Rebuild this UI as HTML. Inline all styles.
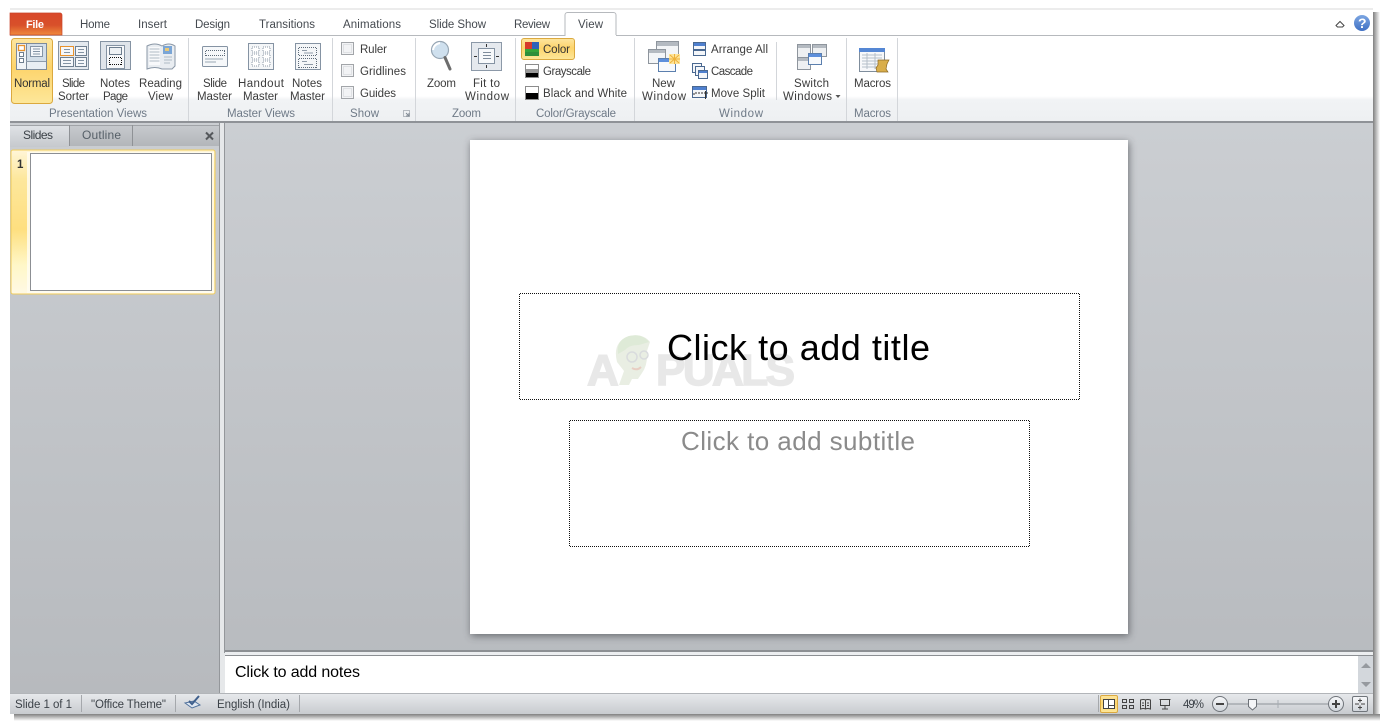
<!DOCTYPE html>
<html><head><meta charset="utf-8"><title>PowerPoint</title>
<style>
html,body{margin:0;padding:0;background:#fff;width:1384px;height:724px;overflow:hidden}
svg{display:block}
text{font-family:"Liberation Sans",sans-serif;font-size:11.5px;fill:#3c3c3c}
.g{fill:#6f7a87}
.d{fill:#454a50}
.s{fill:#3c4248}
.dot{fill:none;stroke:#111;stroke-dasharray:1 1}
</style></head><body>
<svg width="1384" height="724" viewBox="0 0 1384 724" xmlns="http://www.w3.org/2000/svg">
<defs>
<linearGradient id="main" x1="0" y1="0" x2="0" y2="1"><stop offset="0" stop-color="#cbced2"/><stop offset="1" stop-color="#b7babe"/></linearGradient>
<linearGradient id="file" x1="0" y1="0" x2="0" y2="1"><stop offset="0" stop-color="#d9482a"/><stop offset=".55" stop-color="#d8502a"/><stop offset="1" stop-color="#f08a3c"/></linearGradient>
<linearGradient id="sel" x1="0" y1="0" x2="0" y2="1"><stop offset="0" stop-color="#fde6a0"/><stop offset=".45" stop-color="#fdd46c"/><stop offset="1" stop-color="#fde79a"/></linearGradient>
<linearGradient id="thumb" x1="0" y1="0" x2="0" y2="1"><stop offset="0" stop-color="#fff6d8"/><stop offset=".2" stop-color="#fde79c"/><stop offset=".55" stop-color="#fedf80"/><stop offset=".8" stop-color="#fff7c8"/><stop offset="1" stop-color="#fff9e4"/></linearGradient>
<linearGradient id="tab" x1="0" y1="0" x2="0" y2="1"><stop offset="0" stop-color="#dfe2e6"/><stop offset="1" stop-color="#c6c9cd"/></linearGradient>
<linearGradient id="tab2" x1="0" y1="0" x2="0" y2="1"><stop offset="0" stop-color="#c6c9cd"/><stop offset="1" stop-color="#b3b6ba"/></linearGradient>
<linearGradient id="stat" x1="0" y1="0" x2="0" y2="1"><stop offset="0" stop-color="#e8eaed"/><stop offset="1" stop-color="#c8cbcf"/></linearGradient>
<linearGradient id="btn" x1="0" y1="0" x2="0" y2="1"><stop offset="0" stop-color="#f8f9fb"/><stop offset="1" stop-color="#cfd4da"/></linearGradient>
<linearGradient id="shr" x1="0" y1="0" x2="1" y2="0"><stop offset="0" stop-color="#808080"/><stop offset="1" stop-color="#fff"/></linearGradient>
<linearGradient id="shb" x1="0" y1="0" x2="0" y2="1"><stop offset="0" stop-color="#808080"/><stop offset="1" stop-color="#fff"/></linearGradient>
<linearGradient id="help" x1="0" y1="0" x2="0" y2="1"><stop offset="0" stop-color="#7da6e2"/><stop offset="1" stop-color="#3f70c4"/></linearGradient>
<linearGradient id="band" x1="0" y1="0" x2="0" y2="1"><stop offset="0" stop-color="#fff"/><stop offset=".15" stop-color="#f1f3f5"/><stop offset="1" stop-color="#eef0f2"/></linearGradient>
<filter id="blur" x="-10%" y="-10%" width="120%" height="120%"><feGaussianBlur stdDeviation="4"/></filter>
</defs>

<!-- window shadow -->
<rect x="1373" y="12" width="7" height="702" fill="url(#shr)"/>
<rect x="14" y="714" width="1366" height="7" fill="url(#shb)"/>
<rect x="10" y="8" width="1363" height="2" fill="#ececec"/>

<!-- tab row -->
<rect x="10" y="10" width="1363" height="26" fill="#fff"/>
<rect x="10" y="35" width="1363" height="1" fill="#b6b9bd"/>
<path d="M10 35V13h50a2 2 0 0 1 2 2v20z" fill="url(#file)" stroke="#c9452a" stroke-width=".7"/>
<text x="26" y="28" textLength="18" style="fill:#fff;font-weight:bold;font-size:11px">File</text>
<text x="80" y="28" textLength="30" class="d">Home</text>
<text x="138" y="28" textLength="29" class="d">Insert</text>
<text x="195" y="28" textLength="35" class="d">Design</text>
<text x="259" y="28" textLength="56" class="d">Transitions</text>
<text x="343" y="28" textLength="58" class="d">Animations</text>
<text x="429" y="28" textLength="57" class="d">Slide Show</text>
<text x="514" y="28" textLength="36" class="d">Review</text>
<path d="M565 36V15a2.500 2.500 0 0 1 2.500-2.500h46a2.500 2.500 0 0 1 2.500 2.500v21" fill="#fff" stroke="#b6b9bd"/>
<rect x="566" y="35" width="50" height="2" fill="#fff"/>
<text x="578" y="28" textLength="25" class="d">View</text>
<path d="M1336 25.500l4-4 4 4-1.500 1.500h-5z" fill="#fff" stroke="#444" stroke-width="1"/>
<circle cx="1362" cy="23" r="8" fill="url(#help)"/>
<text x="1358" y="28" textLength="8" style="fill:#fff;font-weight:bold;font-size:14px">?</text>

<!-- ribbon -->
<rect x="10" y="36" width="1363" height="60" fill="#fff"/>
<rect x="10" y="96" width="1363" height="25" fill="url(#band)"/>
<rect x="10" y="121" width="1363" height="2" fill="#8f9297"/>
<g fill="#d3d6da">
<rect x="188" y="38" width="1" height="83"/><rect x="332" y="38" width="1" height="83"/><rect x="415" y="38" width="1" height="83"/><rect x="515" y="38" width="1" height="83"/><rect x="634" y="38" width="1" height="83"/><rect x="846" y="38" width="1" height="83"/><rect x="897" y="38" width="1" height="83"/><rect x="776" y="42" width="1" height="58"/>
</g>

<!-- Normal button -->
<rect x="11.500" y="38.500" width="41" height="65" rx="3" fill="url(#sel)" stroke="#dba93f"/>
<rect x="16.500" y="43.500" width="30" height="26" fill="#e9eef3" stroke="#7d8b9b"/>
<rect x="26" y="44" width="20" height="17" fill="#d3dee8"/>
<rect x="17" y="44" width="9" height="25" fill="#f1f4f7"/>
<rect x="26" y="44" width="1" height="25" fill="#7d8b9b"/>
<rect x="26" y="61" width="20" height="1" fill="#8e9cab"/>
<rect x="18.500" y="45.500" width="6" height="5" fill="#fff" stroke="#e8922d" stroke-width="1.300"/>
<rect x="19.500" y="52.500" width="4" height="4" fill="#fff" stroke="#6f7f90"/>
<rect x="19.500" y="58.500" width="4" height="4" fill="#fff" stroke="#6f7f90"/>
<rect x="30.500" y="46.500" width="12" height="10" fill="#f5f7fa" stroke="#8494a5"/>
<path d="M33 49h7M33 51.500h7M33 54h7" stroke="#8494a5"/>
<text x="14" y="87" textLength="36" style="fill:#333">Normal</text>

<!-- Slide Sorter -->
<rect x="58.500" y="41.500" width="30" height="28" fill="#e4e9ef" stroke="#8593a3"/>
<rect x="60.500" y="46.500" width="13" height="9" fill="#f5f7fa" stroke="#e8922d"/>
<rect x="75.500" y="46.500" width="11" height="9" fill="#f5f7fa" stroke="#6f7f90"/>
<rect x="60.500" y="57.500" width="13" height="9" fill="#f5f7fa" stroke="#6f7f90"/>
<rect x="75.500" y="57.500" width="11" height="9" fill="#f5f7fa" stroke="#6f7f90"/>
<path d="M64 49.500h6M64 52.500h6M78 49.500h6M78 52.500h6M63 60.500h8M63 63.500h8M78 60.500h6M78 63.500h6" stroke="#8494a5"/>
<text x="62" y="87" textLength="23">Slide</text><text x="58" y="100" textLength="31">Sorter</text>

<!-- Notes Page -->
<rect x="100.500" y="41.500" width="30" height="28" fill="#dfe4ea" stroke="#8593a3"/>
<rect x="106.500" y="45.500" width="18" height="23" fill="#f7f8fa" stroke="#8593a3"/>
<rect x="109.500" y="47.500" width="12" height="7" fill="#eef1f4" stroke="#6f7f90"/>
<path class="dot" d="M110 57.500h12M110 64.500h12M109.500 58v7M121.500 58v7"/>
<text x="100" y="87" textLength="30">Notes</text><text x="103" y="100" textLength="25">Page</text>

<!-- Reading View -->
<path d="M147 46q8-4 15 0q7-4 13 0v20l-3 3h-10q-7-3-15 0z" fill="#e9edf1" stroke="#8a97a6"/>
<rect x="149" y="47" width="11" height="18" fill="#f8f9fb"/>
<path d="M149.500 49h10M149.500 52h10M149.500 55h10M149.500 58h10M149.500 61h10" stroke="#b0bac5"/>
<rect x="163" y="46" width="9" height="8" fill="#7ba6d6"/>
<rect x="165" y="48" width="4" height="3" fill="#e8c878"/>
<path d="M164 57h8M164 60h8M164 63h6" stroke="#b0bac5"/>
<text x="139" y="87" textLength="43">Reading</text><text x="148" y="100" textLength="25">View</text>
<text x="49" y="117" textLength="98" class="g">Presentation Views</text>

<!-- Slide Master -->
<rect x="202.500" y="46.500" width="25" height="20" rx="1" fill="#f6f8fa" stroke="#8593a3"/>
<path class="dot" style="stroke:#5d6a78" d="M206 50.500h19M206 55.500h19M205.500 51v5M224.500 51v5"/>
<path d="M205 59h18M205 62h11" stroke="#9aa7b4"/>
<text x="203" y="87" textLength="24">Slide</text><text x="197" y="100" textLength="35">Master</text>

<!-- Handout Master -->
<rect x="248.500" y="43.500" width="25" height="26" fill="#f4f6f8" stroke="#8593a3"/>
<path d="M252 47h7v5h-7zM263 47h7v5h-7zM252 54h7v5h-7zM263 54h7v5h-7zM252 61h7v5h-7zM263 61h7v5h-7z" fill="#fff" stroke="#8e9aa7" stroke-dasharray="1 1"/>
<text x="238" y="87" textLength="46">Handout</text><text x="243" y="100" textLength="35">Master</text>

<!-- Notes Master -->
<rect x="295.500" y="43.500" width="25" height="26" fill="#f4f6f8" stroke="#8593a3"/>
<path class="dot" style="stroke:#5d6a78" d="M299 47.500h18M299 55.500h18M298.500 48v8M316.500 48v8M299 58.500h18M299 67.500h18M298.500 59v9M316.500 59v9"/>
<path d="M302 50.500h5M304 53h9M302 61.500h5M304 64.500h9" stroke="#8e9aa7"/>
<text x="292" y="87" textLength="30">Notes</text><text x="290" y="100" textLength="35">Master</text>
<text x="227" y="117" textLength="68" class="g">Master Views</text>

<!-- Show -->
<g fill="#f2f3f5" stroke="#a2a5a9"><rect x="341.500" y="42.500" width="12" height="12"/><rect x="341.500" y="64.500" width="12" height="12"/><rect x="341.500" y="86.500" width="12" height="12"/></g>
<g fill="none" stroke="#dfe1e4"><rect x="343.500" y="44.500" width="8" height="8"/><rect x="343.500" y="66.500" width="8" height="8"/><rect x="343.500" y="88.500" width="8" height="8"/></g>
<text x="360" y="53" textLength="27">Ruler</text>
<text x="360" y="75" textLength="46">Gridlines</text>
<text x="360" y="97" textLength="36">Guides</text>
<text x="350" y="117" textLength="29" class="g">Show</text>
<path d="M403.500 110.500h6v6h-6z" fill="none" stroke="#b5bac0"/><path d="M406 113l3 3m-3 0h3v-3" fill="none" stroke="#7f8892"/>

<!-- Zoom -->
<circle cx="440" cy="50" r="8.500" fill="#cfe0ee" stroke="#97a6b4" stroke-width="1.200"/>
<path d="M433 50q1-6 7-7" fill="none" stroke="#fff" stroke-width="2"/>
<path d="M445 57.500l5 11.500" stroke="#6d6d6d" stroke-width="3" stroke-linecap="round"/>
<text x="427" y="87" textLength="29">Zoom</text>
<rect x="471.500" y="42.500" width="30" height="28" fill="#e5e9ee" stroke="#8c99a8"/>
<rect x="478.500" y="48.500" width="16" height="15" fill="#f7f9fb" stroke="#8593a3"/>
<path d="M483 52.500h8M483 55.500h8M483 58.500h8" stroke="#7e8c9b"/>
<path d="M486.500 44v3M486.500 65v3M474 56.500h3M496 56.500h3" stroke="#333"/>
<text x="473" y="87" textLength="27">Fit to</text><text x="465" y="100" textLength="44">Window</text>
<text x="452" y="117" textLength="29" class="g">Zoom</text>

<!-- Color -->
<rect x="521.500" y="38.500" width="53" height="21" rx="2.500" fill="url(#sel)" stroke="#dba93f"/>
<rect x="525" y="42" width="14" height="14" fill="#2f8f3a"/>
<rect x="525" y="42" width="7" height="7" fill="#d63a2a"/>
<rect x="532" y="42" width="7" height="7" fill="#2e62b8"/>
<rect x="525" y="49" width="14" height="3" fill="#35a43a"/>
<text x="543" y="53" textLength="27" style="fill:#333">Color</text>
<rect x="525.500" y="64.500" width="13" height="13" fill="#fff" stroke="#8c8c8c"/><rect x="526" y="69" width="12" height="4" fill="#9a9a9a"/><rect x="526" y="73" width="12" height="4" fill="#000"/>
<text x="543" y="75" textLength="48">Grayscale</text>
<rect x="525.500" y="86.500" width="13" height="13" fill="#fff" stroke="#8c8c8c"/><rect x="526" y="93" width="12" height="6" fill="#000"/>
<text x="543" y="97" textLength="84">Black and White</text>
<text x="536" y="117" textLength="80" class="g">Color/Grayscale</text>

<!-- New Window -->
<rect x="656.500" y="41.500" width="22" height="18" fill="#f3f5f7" stroke="#8e959d"/><rect x="657" y="42" width="21" height="4" fill="#b4bac1"/>
<rect x="648.500" y="49.500" width="17" height="14" fill="#f3f5f7" stroke="#8e959d"/><rect x="649" y="50" width="16" height="3" fill="#b4bac1"/>
<rect x="658.500" y="58.500" width="17" height="13" fill="#f7f9fc" stroke="#5b7fae"/><rect x="659" y="59" width="16" height="3" fill="#5d8fdc"/>
<rect x="669" y="54" width="11" height="10" fill="#fde49a"/>
<path d="M670 55l9 8M679 55l-9 8M674.500 54v10M669 59h11" stroke="#eeb13b"/>
<text x="652" y="87" textLength="23">New</text><text x="642" y="100" textLength="44">Window</text>

<!-- Arrange All -->
<rect x="693.500" y="42.500" width="12" height="13" fill="#f4f6f9" stroke="#4a6890"/><rect x="694" y="43" width="11" height="3" fill="#4f80cf"/><rect x="694" y="49" width="11" height="2" fill="#4a6890"/>
<text x="711" y="53" textLength="57">Arrange All</text>
<rect x="692.500" y="63.500" width="9" height="9" fill="#f4f6f9" stroke="#4a6890"/><rect x="695.500" y="66.500" width="9" height="9" fill="#f4f6f9" stroke="#4a6890"/><rect x="698.500" y="70.500" width="9" height="8" fill="#f4f6f9" stroke="#4a6890"/><rect x="699" y="71" width="8" height="2" fill="#4f80cf"/>
<text x="711" y="75" textLength="42">Cascade</text>
<rect x="692.500" y="86.500" width="14" height="11" fill="#f4f6f9" stroke="#4a6890"/><rect x="693" y="87" width="13" height="3" fill="#4f80cf"/>
<path d="M695 93h2M698 93h2M701 93h2M704 93h4M705.500 91v8M694 93v2" stroke="#333"/>
<text x="711" y="97" textLength="54">Move Split</text>
<text x="719" y="117" textLength="44" class="g">Window</text>

<!-- Switch Windows -->
<rect x="797.500" y="44.500" width="13" height="14" fill="#eef0f2" stroke="#8e959d"/><rect x="798" y="45" width="12" height="3" fill="#b4bac1"/>
<rect x="812.500" y="44.500" width="14" height="12" fill="#eef0f2" stroke="#8e959d"/><rect x="813" y="45" width="13" height="3" fill="#b4bac1"/>
<rect x="797.500" y="57.500" width="13" height="12" fill="#eef0f2" stroke="#8e959d"/><rect x="798" y="58" width="12" height="3" fill="#b4bac1"/>
<rect x="808.500" y="53.500" width="13" height="11" fill="#f7f9fc" stroke="#5b7fae"/><rect x="809" y="54" width="12" height="3" fill="#5d8fdc"/>
<text x="794" y="87" textLength="35">Switch</text><text x="783" y="100" textLength="49">Windows</text>
<path d="M835.500 95h5l-2.500 3z" fill="#555"/>

<!-- Macros -->
<rect x="859.500" y="48.500" width="25" height="23" fill="#f7f8fa" stroke="#7f8d9c"/><rect x="859" y="48" width="26" height="4" fill="#5587d4"/>
<path d="M862 55h20M862 58h20M862 61h20M862 64h20M862 67h15M867 53v16M875 53v16" stroke="#b6bfc9"/>
<path d="M878 60h11l-2 4-1 5 2 3h-11l-1-4 2-3z" fill="#d9ae4b" stroke="#8d6a24" stroke-width=".7"/>
<text x="854" y="87" textLength="37">Macros</text>
<text x="854" y="117" textLength="37" class="g">Macros</text>

<!-- main area -->
<rect x="10" y="123" width="1363" height="570" fill="url(#main)"/>
<rect x="219" y="123" width="6" height="570" fill="#e6e8ea"/>
<rect x="219" y="123" width="1" height="570" fill="#94979b"/>
<rect x="224" y="123" width="1" height="530" fill="#94979b"/>

<!-- left tabs -->
<rect x="10" y="125" width="209" height="1" fill="#a0a3a7"/>
<rect x="10" y="145" width="209" height="1" fill="#8f9296"/>
<rect x="69" y="126" width="63" height="20" fill="url(#tab2)"/>
<rect x="132" y="126" width="87" height="20" fill="url(#tab2)"/>
<rect x="10" y="126" width="59" height="21" fill="url(#tab)"/>
<rect x="69" y="125" width="1" height="21" fill="#8f9296"/>
<rect x="132" y="125" width="1" height="21" fill="#8f9296"/>
<text x="23" y="139" textLength="30" class="s" style="font-size:12px">Slides</text>
<text x="82" y="139" textLength="39" style="fill:#566068;font-size:12px">Outline</text>
<path d="M206 132.500l7 7M213 132.500l-7 7" stroke="#55585c" stroke-width="2"/>

<!-- slide thumb -->
<rect x="11" y="150" width="204" height="144" rx="2" fill="url(#thumb)" stroke="#f0cc5c"/>
<rect x="27" y="152" width="187" height="141" fill="#fffdf3" opacity=".8"/>
<text x="17" y="168" textLength="7" style="font-weight:bold;fill:#333">1</text>
<rect x="30.500" y="153.500" width="181" height="137" fill="#fff" stroke="#8c8f93"/>

<!-- slide -->
<rect x="470" y="140" width="658" height="494" fill="#3c3f44" opacity=".65" filter="url(#blur)" transform="translate(1 2)"/>
<rect x="470" y="140" width="658" height="494" fill="#fff"/>
<!-- watermark -->
<g opacity=".9">
<text x="587" y="385" textLength="27" style="font-size:44px;font-weight:bold;fill:#e6e6e6;stroke:#e6e6e6;stroke-width:1.500">A</text>
<path d="M617 362q-5-20 12-26q14-3 21 6l-3 9q1 14-5 22q-4 6-4 6h-6l-3 6h-10l5-14z" fill="#e7ede0"/>
<path d="M618 354q-2-14 11-18q13-3 20 6l-10 3q-10 0-14 5z" fill="#dbe8d3"/>
<circle cx="632" cy="357" r="5" fill="none" stroke="#d5d8da" stroke-width="1.500"/><circle cx="644" cy="355" r="4" fill="none" stroke="#d5d8da" stroke-width="1.500"/>
<path d="M632 368q5 3 9-1" fill="none" stroke="#e6c9bd" stroke-width="2"/>
<text x="656" y="385" textLength="139" style="font-size:44px;font-weight:bold;fill:#e6e6e6;stroke:#e6e6e6;stroke-width:1.500">PUALS</text>
</g>
<path class="dot" d="M520 293.500h560M520 399.500h560M519.500 294v106M1079.500 294v106"/>
<path class="dot" d="M570 420.500h460M570 546.500h460M569.500 421v126M1029.500 421v126"/>
<text x="667" y="360" textLength="263" style="font-size:36px;fill:#000">Click to add title</text>
<text x="681" y="450" textLength="234" style="font-size:26px;fill:#8b8b8b">Click to add subtitle</text>

<!-- notes -->
<rect x="225" y="650" width="1148" height="2" fill="#8c8f93"/>
<rect x="225" y="652" width="1148" height="3" fill="#eceef0"/>
<rect x="225" y="655" width="1148" height="1" fill="#8c8f93"/>
<rect x="225" y="656" width="1133" height="37" fill="#fff"/>
<rect x="1358" y="656" width="15" height="37" fill="#d3d7dc"/>
<path d="M1361 668h10l-5-5zM1361 682h10l-5 5z" fill="#969a9f"/>
<text x="235" y="677" textLength="125" style="font-size:16px;fill:#000">Click to add notes</text>

<!-- status bar -->
<rect x="10" y="693" width="1363" height="21" fill="url(#stat)"/>
<rect x="10" y="693" width="1363" height="1" fill="#b2b5b9"/>
<g fill="#a5a8ac"><rect x="81" y="695" width="1" height="17"/><rect x="175" y="695" width="1" height="17"/><rect x="299" y="695" width="1" height="17"/><rect x="1098" y="695" width="1" height="17"/></g>
<text x="15" y="708" textLength="57" class="s">Slide 1 of 1</text>
<text x="91" y="708" textLength="75" class="s">"Office Theme"</text>
<path d="M185 703l7 5 8-3-6-4z" fill="#dfe7f1" stroke="#50719c"/><path d="M189 701l3 3 7-8" fill="none" stroke="#3e5f8c" stroke-width="2"/>
<text x="217" y="708" textLength="73" class="s">English (India)</text>

<!-- status right -->
<rect x="1100.500" y="695.500" width="17" height="17" rx="1.500" fill="url(#sel)" stroke="#dba93f"/>
<rect x="1103.500" y="699.500" width="11" height="9" fill="#fff" stroke="#444"/><path d="M1108.500 699.500v9M1108.500 705.500h6" stroke="#444"/>
<g fill="none" stroke="#444"><rect x="1122.500" y="699.500" width="4" height="3"/><rect x="1129.500" y="699.500" width="4" height="3"/><rect x="1122.500" y="705.500" width="4" height="3"/><rect x="1129.500" y="705.500" width="4" height="3"/>
<path d="M1140.500 700q3-1 5 0q2-1 5 0v9q-3-1-5 0q-2-1-5 0zM1145.500 700v9M1142 703h2M1142 705.500h2M1147 703h2M1147 705.500h2"/>
<path d="M1159.500 699.500h11M1160.500 699.500v6h9v-6M1165 705.500v3M1162 709h6"/></g>
<text x="1183" y="708" textLength="21" class="s">49%</text>
<rect x="1227" y="703.500" width="102" height="1" fill="#8d9399"/>
<rect x="1277.500" y="700" width="1" height="8" fill="#a7acb2"/>
<circle cx="1220" cy="704" r="7.500" fill="url(#btn)" stroke="#70757b"/><rect x="1216" y="703" width="8" height="2" fill="#444"/>
<circle cx="1336" cy="704" r="7.500" fill="url(#btn)" stroke="#70757b"/><path d="M1332 704h8M1336 700v8" stroke="#444" stroke-width="2"/>
<path d="M1248.500 699.500h8v7l-4 3.500-4-3.500z" fill="#f4f5f7" stroke="#6d7278"/>
<rect x="1352.500" y="696.500" width="15" height="15" rx="1.500" fill="url(#btn)" stroke="#70757b"/>
<path d="M1360 698.500v4M1358 700.500h4M1355 704h4M1361 704h4M1360 705.500v4M1358 707.500h4" stroke="#444"/>
</svg>
</body></html>
